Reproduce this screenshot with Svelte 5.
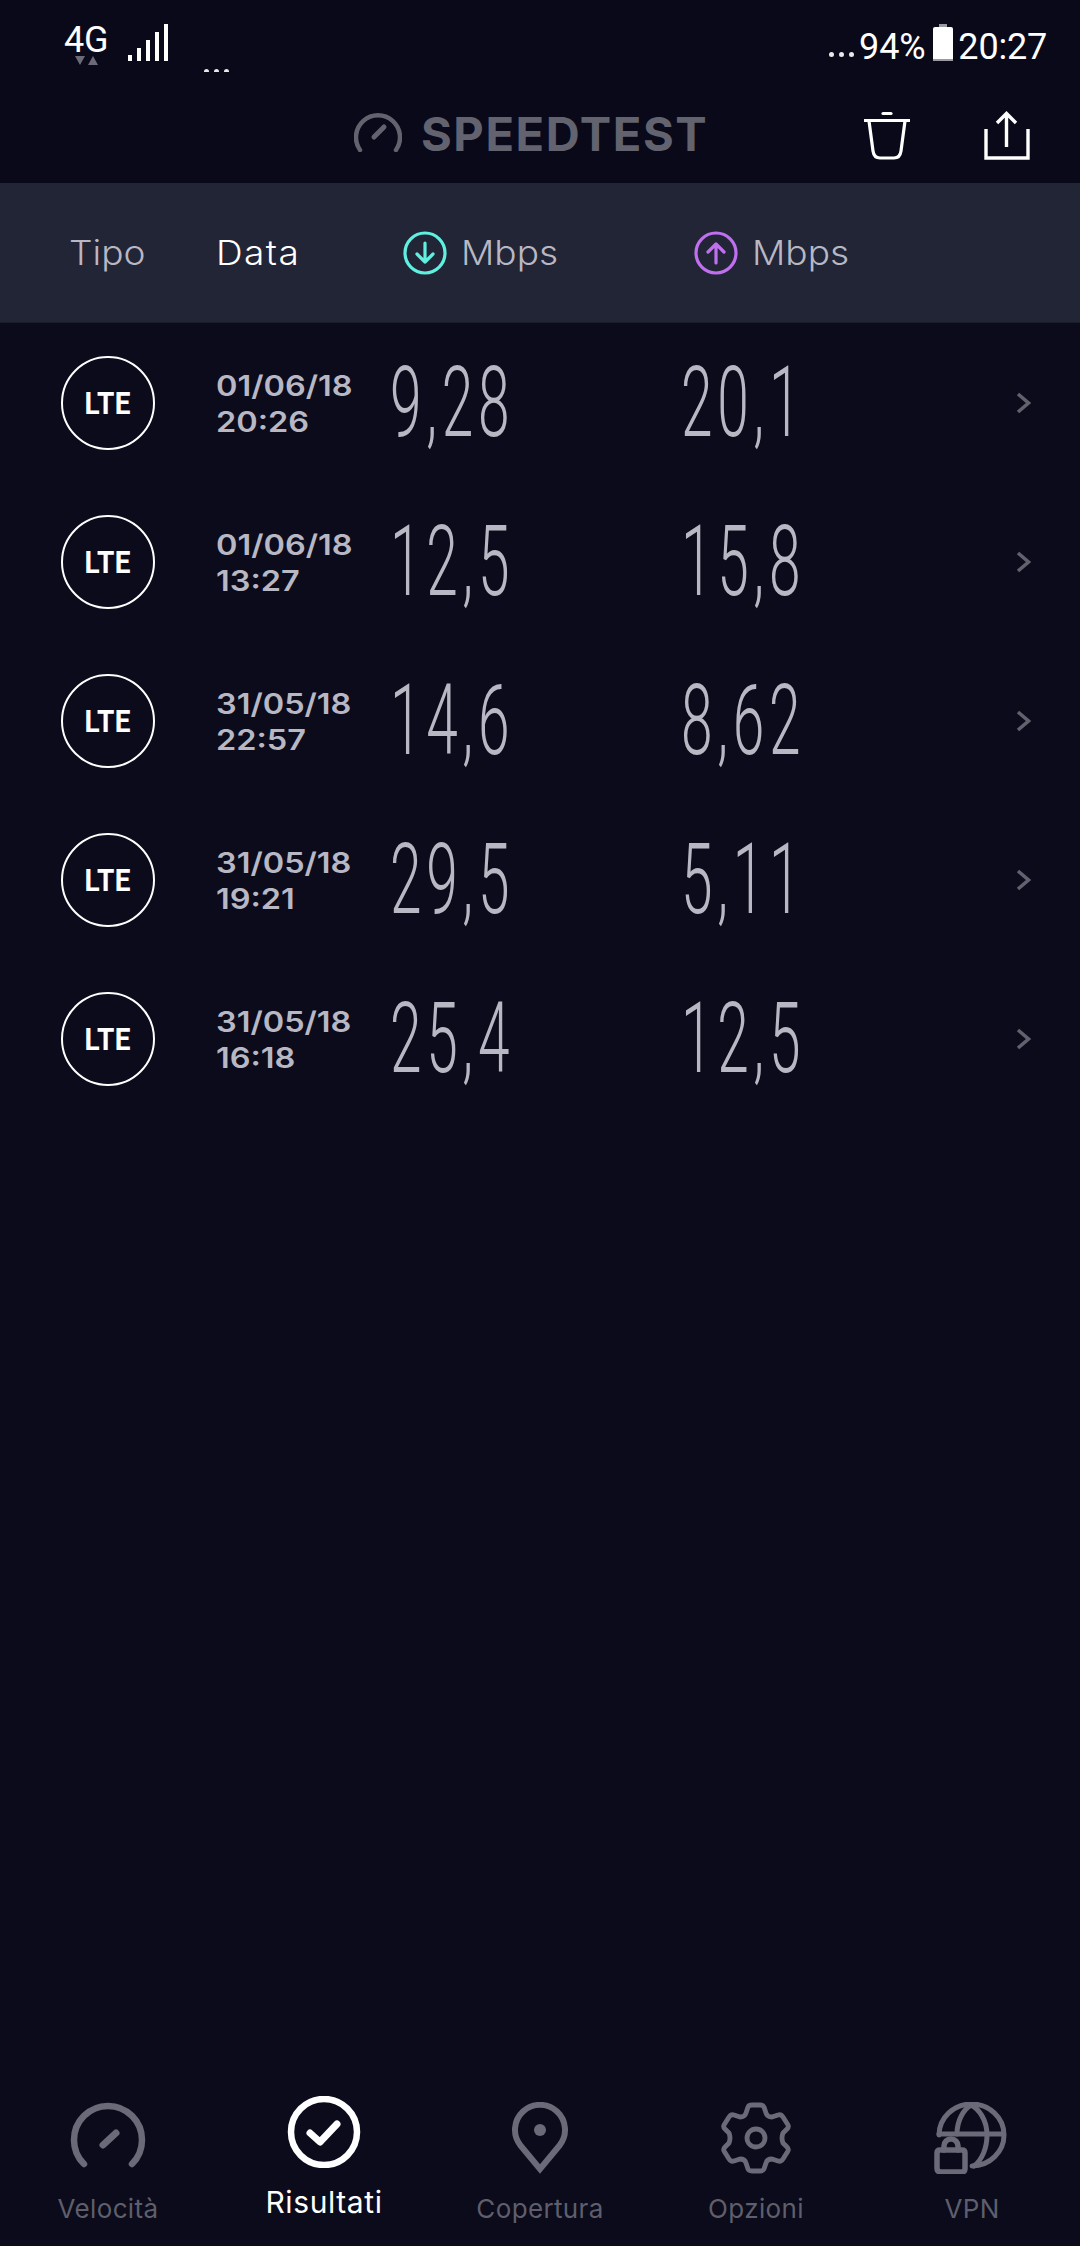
<script>
  const rows = [
    { d: '01/06/18', t: '20:26', down: '9,28', up: '20,1' },
    { d: '01/06/18', t: '13:27', down: '12,5', up: '15,8' },
    { d: '31/05/18', t: '22:57', down: '14,6', up: '8,62' },
    { d: '31/05/18', t: '19:21', down: '29,5', up: '5,11' },
    { d: '31/05/18', t: '16:18', down: '25,4', up: '12,5' }
  ];
</script>

<div class="page">
  <div class="status">
    <div class="net">
      <div class="fg">4G<svg class="arrows" width="24" height="10" viewBox="0 0 24 10"><path d="M1 0h10L6 9zM14 9h10L19 0z" fill="#6b6b78"/></svg></div>
      <svg class="signal" width="42" height="38" viewBox="0 0 42 38">
        <rect x="0" y="31" width="4" height="6" fill="#fff"/>
        <rect x="9" y="24" width="4" height="13" fill="#fff"/>
        <rect x="18" y="16" width="4" height="21" fill="#fff"/>
        <rect x="27" y="8" width="4" height="29" fill="#fff"/>
        <rect x="36" y="0" width="4" height="37" fill="#fff"/>
      </svg>
      <div class="dots low"><i></i><i></i><i></i></div>
    </div>
    <div class="sys">
      <div class="dots"><i></i><i></i><i></i></div>
      <span class="pct">94%</span>
      <svg class="batt" width="22" height="38" viewBox="0 0 22 38"><rect x="7" y="0" width="8" height="3" fill="#9a9aa2"/><rect x="1" y="3" width="20" height="34" rx="2" fill="#fff"/><rect x="1" y="35" width="20" height="2" fill="#9a9aa2"/></svg>
      <span class="time">20:27</span>
    </div>
  </div>

  <header class="top">
    <div class="brand">
      <svg width="48" height="42" viewBox="0 0 48 42" fill="none" stroke="#636370" stroke-linecap="round">
        <path d="M6 40A22 22 0 1 1 42 40" stroke-width="4.5"/>
        <path d="M20 27L30 17" stroke-width="5"/>
      </svg>
      <span>SPEEDTEST</span>
    </div>
    <div class="actions">
      <svg width="48" height="50" viewBox="0 0 48 50" fill="none" stroke="#fff" stroke-width="3.2">
        <path d="M0 9.5H46" />
        <path d="M19 2.500H27" stroke-linecap="round"/>
        <path d="M5 10L9 40Q10 47 16 47H30Q36 47 37 40L41 10"/>
      </svg>
      <svg width="46" height="50" viewBox="0 0 46 50" fill="none" stroke="#fff" stroke-width="3.4">
        <path d="M2 18V47H44V18"/>
        <path d="M22.5 36V3M13 12L22.5 2.500L32 12"/>
      </svg>
    </div>
  </header>

  <div class="cols">
    <span class="c-type"><span class="wide">Tipo</span></span>
    <span class="c-date"><span class="wide">Data</span></span>
    <span class="c-down">
      <svg width="44" height="44" viewBox="0 0 44 44" fill="none" stroke="#5ff0e0" stroke-width="3.2" stroke-linecap="round" stroke-linejoin="round">
        <circle cx="22" cy="22" r="20"/><path d="M22 12V31M14 23L22 31L30 23"/>
      </svg><span class="wide">Mbps</span>
    </span>
    <span class="c-up">
      <svg width="44" height="44" viewBox="0 0 44 44" fill="none" stroke="#c070ee" stroke-width="3.200" stroke-linecap="round" stroke-linejoin="round">
        <circle cx="22" cy="22" r="20"/><path d="M22 32V13M14 21L22 13L30 21"/>
      </svg><span class="wide">Mbps</span>
    </span>
  </div>

  <ul class="list">
    {#each rows as r}
      <li class="row">
        <div class="cell-type"><div class="lte"><span>LTE</span></div></div>
        <div class="cell-date"><span>{r.d}</span><span>{r.t}</span></div>
        <div class="num n-down"><span>{r.down}</span></div>
        <div class="num n-up"><span>{r.up}</span></div>
        <svg class="chev" width="16" height="22" viewBox="0 0 16 22" fill="none" stroke="#62626e" stroke-width="3.600"><path d="M2 2L12.500 11L2 20"/></svg>
      </li>
    {/each}
  </ul>

  <nav class="tabs">
    <div class="tab">
      <svg width="76" height="72" viewBox="0 0 76 72" fill="none" stroke="#6a6a78" stroke-linecap="round">
        <path d="M14 62A34 34 0 1 1 62 62" stroke-width="6.500"/>
        <path d="M33 43L46 31" stroke-width="7"/>
      </svg>
      <span>Velocità</span>
    </div>
    <div class="tab on">
      <svg width="76" height="72" viewBox="0 0 76 72" fill="none" stroke="#fff" stroke-linecap="round" stroke-linejoin="round">
        <circle cx="38" cy="36" r="33" stroke-width="6.500"/>
        <path d="M24 37L34 46L51 28" stroke-width="7"/>
      </svg>
      <span>Risultati</span>
    </div>
    <div class="tab">
      <svg width="76" height="72" viewBox="0 0 76 72" fill="none" stroke="#6a6a78" stroke-width="6" stroke-linejoin="miter">
        <path d="M38 67L18.500 43.500A25 25 0 1 1 57.500 43.500Z"/>
        <circle cx="38" cy="28" r="6" fill="#6a6a78" stroke="none"/>
      </svg>
      <span>Copertura</span>
    </div>
    <div class="tab">
      <svg width="76" height="72" viewBox="0 0 76 72" fill="none" stroke="#6a6a78" stroke-width="4.800" stroke-linejoin="round">
        <path d="M30 5Q31 3 34 3H42Q45 3 46 5L48 11Q49 15 54 15L60 13Q63 12 65 15L70 23Q71 25 69 27L65 31Q63 36 65 41L69 45Q71 47 70 49L65 57Q63 60 60 59L54 57Q49 57 48 61L46 67Q45 69 42 69H34Q31 69 30 67L28 61Q27 57 22 57L16 59Q13 60 11 57L6 49Q5 47 7 45L11 41Q13 36 11 31L7 27Q5 25 6 23L11 15Q13 12 16 13L22 15Q27 15 28 11Z"/>
        <circle cx="38" cy="36" r="9"/>
      </svg>
      <span>Opzioni</span>
    </div>
    <div class="tab">
      <svg width="76" height="72" viewBox="0 0 76 72" fill="none" stroke="#6a6a78" stroke-width="5" stroke-linecap="round" stroke-linejoin="round">
        <path d="M5 33A32.500 31 0 1 1 38 64"/>
        <path d="M5 32H69"/>
        <path d="M23 32C23 18 30 7 37 3"/>
        <path d="M37 3C45 7 53 18 53 33C53 46 48 58 40 64"/>
        <path d="M6 48Q3 48 3 51V66Q3 70 7 70H28Q31 70 31 66V51Q31 48 28 48Z" stroke-width="5.500"/>
        <path d="M10 48V44A7 7 0 0 1 24 44V48" stroke-width="5.500"/>
      </svg>
      <span>VPN</span>
    </div>
  </nav>
</div>

<style>
  :global(body) { margin: 0; background: #0b0b1b; }
  .page {
    width: 1080px; height: 2246px; display: flex; flex-direction: column;
    background: #0b0b1b; overflow: hidden;
    font-family: Inter, "Noto Sans", sans-serif; color: #fff;
  }
  .status {
    height: 72px; flex: none; display: flex; justify-content: space-between;
    padding: 24px 33px 0 64px; box-sizing: border-box;
    font-family: Roboto, sans-serif; background: #09091a;
  }
  .net { display: flex; align-items: flex-start; position: relative; }
  .fg { width: 63px; font-size: 36px; line-height: 32px; position: relative; letter-spacing: -.3px; }
  .arrows { display: block; margin: 0 0 0 10px; position: relative; top: 0; }
  .signal { margin: 0 0 0 1px; }
  .dots { display: flex; gap: 5px; }
  .dots i { width: 5px; height: 5px; border-radius: 50%; background: #e8e8ea; display: block; }
  .dots.low { margin: 45px 0 0 34px; }
  .sys { display: flex; align-items: flex-start; font-size: 36px; line-height: 36px; margin-top: 5px; }
  .sys .dots { margin: 23px 5px 0 0; }
  .batt { margin: -5px 4px 0 7px; flex: none; }
  .pct, .time { letter-spacing: -.2px; }

  .top {
    height: 111px; flex: none; position: relative; display: flex; align-items: center;
    background: #09091a;
  }
  .brand {
    position: absolute; left: 354px; top: 38px; display: flex; align-items: center; gap: 19px;
    font-family: Inter, sans-serif; color: #636370; font-size: 47px; font-weight: 700; letter-spacing: 1.600px; line-height: 42px;
  }
  .brand span { position: relative; top: 3px; }
  .actions { position: absolute; left: 864px; top: 39px; display: flex; gap: 72px; }

  .cols {
    height: 140px; flex: none; background: #212536; display: flex; align-items: center;
    font-size: 34px; color: #b8b8c4; font-weight: 300; box-sizing: border-box; border-bottom: 1px solid #1a1d2c;
  }
  .wide { display: inline-block; transform: scaleX(1.09); transform-origin: left center; }
  .c-type { width: 216px; padding-left: 69px; box-sizing: border-box; }
  .c-date { width: 187px; color: #fff; letter-spacing: 1.300px; }
  .c-down { width: 291px; display: flex; align-items: center; gap: 14px; }
  .c-up { display: flex; align-items: center; gap: 14px; }

  .list { list-style: none; margin: 0; padding: 0; flex: 1; }
  .row { height: 159px; display: flex; align-items: center; position: relative; }
  .cell-type { width: 216px; padding-left: 61px; box-sizing: border-box; }
  .lte {
    width: 94px; height: 94px; box-sizing: border-box; border: 2px solid #fff; border-radius: 50%;
    display: flex; align-items: center; justify-content: center;
    font-family: "Roboto", sans-serif; font-weight: 700; font-size: 31px;
  }
  .lte span { display: inline-block; transform: translateY(1px) scaleX(.9); letter-spacing: .5px; }
  .cell-date {
    width: 174px; display: flex; flex-direction: column; font-size: 28px; line-height: 36px;
    font-weight: 600; color: #b8b8c4; padding-top: 2px;
  }
  .cell-date span { display: inline-block; transform: scaleX(1.16); transform-origin: left center; }
  .num { width: 291px; height: 100px; display: flex; align-items: center; color: #b8b8c4; font-family: Roboto, sans-serif; font-weight: 300; font-size: 98px; }
  .num span { display: inline-block; transform: scaleX(.58); transform-origin: left center; letter-spacing: 8px; }
  .chev { position: absolute; left: 1016px; top: 69px; }

  .tabs { height: 186px; flex: none; display: flex; padding: 6px 0 0 0; box-sizing: border-box; margin-top: -1px; }
  .tab { width: 216px; display: flex; flex-direction: column; align-items: center; color: #5e5e6c; font-size: 26px; letter-spacing: .35px; }
  .tab svg { margin-top: 36px; flex: none; }
  .tab span { margin-top: 19px; line-height: 32px; }
  .tab.on { color: #fff; font-size: 30px; letter-spacing: .6px; }
  .tab.on svg { margin-top: 30px; }
  .tab.on span { margin-top: 18px; }
</style>
